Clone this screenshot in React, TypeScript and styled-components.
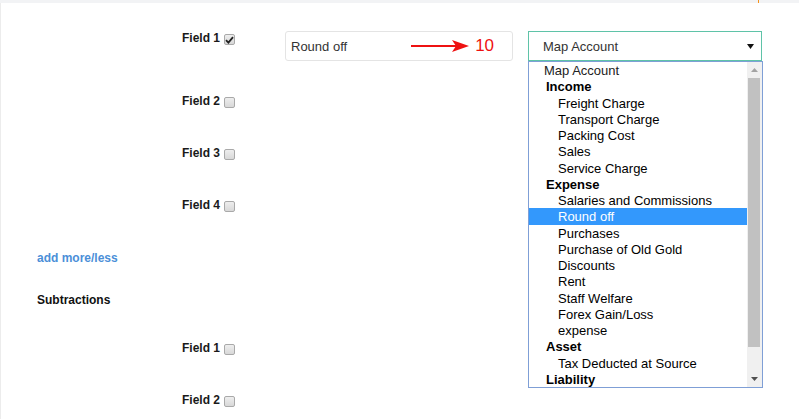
import React from "react";
import styled, { createGlobalStyle } from "styled-components";

const Global = createGlobalStyle`
  html, body { margin: 0; padding: 0; background: #fff; }
  body { font-family: "Liberation Sans", Arial, sans-serif; width: 799px; height: 419px; overflow: hidden; }
`;

const Page = styled.div`
  width: 799px;
  height: 419px;
  display: flex;
  flex-direction: column;
  background: #fff;
`;

const TopBar = styled.div`
  height: 3px;
  flex: none;
  background: #f2f3f5;
  display: flex;
`;

const TopMark = styled.div`
  margin-left: 758px;
  width: 1px;
  background: #f7941d;
`;

const Body = styled.div`
  flex: 1;
  border-left: 1px solid #ececec;
  display: flex;
  flex-direction: column;
`;

const FirstRow = styled.div`
  margin-top: 28px;
  display: flex;
  align-items: flex-start;
  height: 30px;
`;

const FieldRow = styled.div<{ $h?: number; $mt?: number }>`
  height: ${(p) => p.$h ?? 52}px;
  margin-top: ${(p) => p.$mt ?? 0}px;
  display: flex;
  align-items: center;
  flex: none;
`;

const LabelCell = styled.div`
  width: 234px;
  height: 14px;
  display: flex;
  justify-content: flex-end;
  align-items: center;
  flex: none;
`;

const FieldLabel = styled.span`
  font-size: 12px;
  line-height: 14px;
  font-weight: bold;
  color: #1a1a1a;
`;

const Box = styled.span<{ $checked?: boolean }>`
  width: 11px;
  height: 11px;
  margin-left: 4px;
  margin-top: 3px;
  border: 1px solid #a9a9a9;
  border-radius: 2px;
  background: linear-gradient(#eeeeee, #d8d8d8);
  display: flex;
  align-items: center;
  justify-content: center;
  box-sizing: border-box;
  flex: none;
`;

const SideText = styled.div<{ $link?: boolean }>`
  margin-left: 36px;
  font-size: 12px;
  line-height: 14px;
  font-weight: bold;
  color: ${(p) => (p.$link ? "#4b8fd8" : "#111")};
`;

const InputBox = styled.div`
  margin-left: 50px;
  width: 228px;
  height: 30px;
  box-sizing: border-box;
  border: 1px solid #e4e4e4;
  border-radius: 3px;
  display: flex;
  align-items: center;
  padding-left: 5px;
  font-size: 13px;
  color: #333;
  flex: none;
`;

const Arrow = styled.svg`
  margin-left: 64px;
  flex: none;
`;

const Note = styled.span`
  margin-left: 5px;
  font-size: 17px;
  color: #ee1111;
`;

const SelectWrap = styled.div`
  position: relative;
  margin-left: 15px;
  width: 234px;
  flex: none;
`;

const SelectBox = styled.div`
  height: 30px;
  box-sizing: border-box;
  border: 1px solid #5fc3a8;
  display: flex;
  align-items: center;
  padding-left: 14px;
  padding-right: 7px;
  font-size: 13px;
  color: #333;
`;

const SelectText = styled.span`
  flex: 1;
`;

const ListBox = styled.div`
  position: absolute;
  left: 0;
  top: 30px;
  width: 235px;
  height: 327px;
  box-sizing: border-box;
  border: 1px solid #7f9fd6;
  background: #fff;
  display: flex;
  z-index: 5;
`;

const Options = styled.div`
  flex: 1;
  display: flex;
  flex-direction: column;
`;

const Option = styled.div<{ $kind: "top" | "group" | "item"; $selected?: boolean }>`
  height: 16.25px;
  line-height: 18px;
  font-size: 13px;
  white-space: nowrap;
  padding-left: ${(p) => (p.$kind === "top" ? 15 : p.$kind === "group" ? 17 : 29)}px;
  font-weight: ${(p) => (p.$kind === "group" ? "bold" : "normal")};
  color: ${(p) => (p.$selected ? "#fff" : p.$kind === "top" ? "#222" : "#000")};
  background: ${(p) => (p.$selected ? "#3398fc" : "transparent")};
`;

const ScrollBar = styled.div`
  width: 15px;
  display: flex;
  flex-direction: column;
  background: #f0f0f0;
  flex: none;
`;

const ScrollBtn = styled.div`
  height: 16px;
  display: flex;
  align-items: center;
  justify-content: center;
  flex: none;
`;

const Track = styled.div`
  flex: 1;
  display: flex;
  flex-direction: column;
`;

const Thumb = styled.div`
  height: 269px;
  margin: 0 2px 0 1px;
  background: #c1c1c1;
`;

type Opt = { label: string; kind: "top" | "group" | "item"; selected?: boolean };

const options: Opt[] = [
  { label: "Map Account", kind: "top" },
  { label: "Income", kind: "group" },
  { label: "Freight Charge", kind: "item" },
  { label: "Transport Charge", kind: "item" },
  { label: "Packing Cost", kind: "item" },
  { label: "Sales", kind: "item" },
  { label: "Service Charge", kind: "item" },
  { label: "Expense", kind: "group" },
  { label: "Salaries and Commissions", kind: "item" },
  { label: "Round off", kind: "item", selected: true },
  { label: "Purchases", kind: "item" },
  { label: "Purchase of Old Gold", kind: "item" },
  { label: "Discounts", kind: "item" },
  { label: "Rent", kind: "item" },
  { label: "Staff Welfare", kind: "item" },
  { label: "Forex Gain/Loss", kind: "item" },
  { label: "expense", kind: "item" },
  { label: "Asset", kind: "group" },
  { label: "Tax Deducted at Source", kind: "item" },
  { label: "Liability", kind: "group" },
];

const CheckBox = ({ checked }: { checked?: boolean }) => (
  <Box $checked={checked}>
    {checked && (
      <svg width="9" height="8" viewBox="0 0 9 8">
        <path d="M1 4.2 L3.4 6.6 L8 1.2" fill="none" stroke="#222" strokeWidth="1.8" />
      </svg>
    )}
  </Box>
);

const Field = ({ n, checked }: { n: number; checked?: boolean }) => (
  <LabelCell>
    <FieldLabel>Field {n}</FieldLabel>
    <CheckBox checked={checked} />
  </LabelCell>
);

export default function App() {
  return (
    <Page>
      <Global />
      <TopBar>
        <TopMark />
      </TopBar>
      <Body>
        <FirstRow>
          <Field n={1} checked />
          <InputBox>
            Round off
            <Arrow width="59" height="14" viewBox="0 0 59 14">
              <line x1="0" y1="7" x2="46" y2="7" stroke="#ee1111" strokeWidth="2" />
              <path d="M41 1 L58 7 L41 13 L45 7 Z" fill="#ee1111" />
            </Arrow>
            <Note>10</Note>
          </InputBox>
          <SelectWrap>
            <SelectBox>
              <SelectText>Map Account</SelectText>
              <svg width="7" height="5" viewBox="0 0 7 5">
                <path d="M0 0 L7 0 L3.5 5 Z" fill="#111" />
              </svg>
            </SelectBox>
            <ListBox>
              <Options>
                {options.map((o) => (
                  <Option key={o.label} $kind={o.kind} $selected={o.selected}>
                    {o.label}
                  </Option>
                ))}
              </Options>
              <ScrollBar>
                <ScrollBtn>
                  <svg width="7" height="4" viewBox="0 0 7 4">
                    <path d="M0 4 L7 4 L3.5 0 Z" fill="#a3a3a3" />
                  </svg>
                </ScrollBtn>
                <Track>
                  <Thumb />
                </Track>
                <ScrollBtn>
                  <svg width="7" height="4" viewBox="0 0 7 4">
                    <path d="M0 0 L7 0 L3.5 4 Z" fill="#505050" />
                  </svg>
                </ScrollBtn>
              </ScrollBar>
            </ListBox>
          </SelectWrap>
        </FirstRow>
        <FieldRow $mt={14}>
          <Field n={2} />
        </FieldRow>
        <FieldRow>
          <Field n={3} />
        </FieldRow>
        <FieldRow>
          <Field n={4} />
        </FieldRow>
        <FieldRow $h={53}>
          <SideText $link>add more/less</SideText>
        </FieldRow>
        <FieldRow $h={32}>
          <SideText>Subtractions</SideText>
        </FieldRow>
        <FieldRow $mt={6}>
          <Field n={1} />
        </FieldRow>
        <FieldRow>
          <Field n={2} />
        </FieldRow>
      </Body>
    </Page>
  );
}
